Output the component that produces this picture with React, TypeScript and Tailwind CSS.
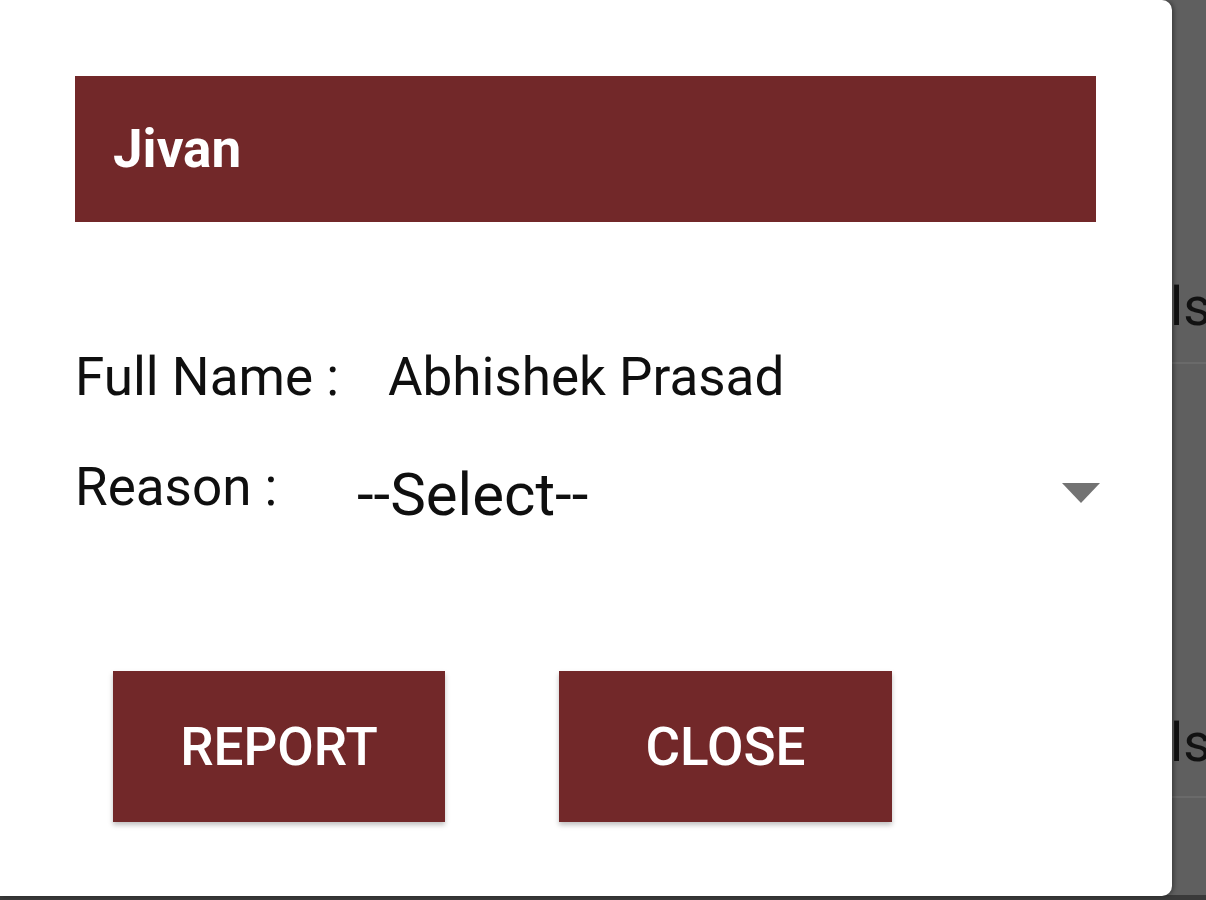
import React from "react";

export default function App() {
  return (
    <div
      className="relative w-[1206px] h-[900px] overflow-hidden bg-[#5f5f5f]"
      style={{ fontFamily: "Roboto, 'Liberation Sans', sans-serif" }}
    >
      {/* page behind the dimming overlay */}
      <div className="flex h-full">
        <div className="w-[1172px] shrink-0" />
        <div className="flex flex-1 flex-col">
          <div className="flex h-[364px] items-end border-b-2 border-[#6a6a6a] pb-[28px]">
            <span className="text-[54px] leading-[54px] text-[#111] -ml-[2px]">ls</span>
          </div>
          <div className="flex h-[434px] items-end border-b-2 border-[#6a6a6a] pb-[26px]">
            <span className="text-[54px] leading-[54px] text-[#111] -ml-[2px]">ls</span>
          </div>
        </div>
      </div>
      <div className="absolute bottom-0 left-0 h-[5px] w-full bg-[#3a3a3a]" />

      {/* dialog */}
      <div className="absolute left-0 top-0 flex h-[896px] w-[1172px] flex-col rounded-r-[10px] bg-white pl-[75px] pr-[76px] pt-[76px] shadow-[2px_0_4px_rgba(0,0,0,0.35)]">
        <div className="flex h-[146px] items-center bg-[#722829] pl-[38px]">
          <span className="text-[53px] font-bold leading-[54px] text-white">Jivan</span>
        </div>

        <div className="mt-[128px] flex text-[53px] leading-[54px] text-[#0f0f0f]">
          <span className="w-[313px] shrink-0">Full Name :</span>
          <span>Abhishek Prasad</span>
        </div>

        <div className="mt-[56px] flex items-start text-[#0f0f0f]">
          <span className="w-[282px] shrink-0 text-[53px] leading-[54px]">Reason :</span>
          <div className="mt-[5px] flex flex-1 items-center justify-between">
            <span className="text-[60px] leading-[60px]">--Select--</span>
            <svg width="38" height="20" viewBox="0 0 38 20" className="-mr-[4px] mt-[-4px]">
              <polygon points="0,0 38,0 19,20" fill="#737373" />
            </svg>
          </div>
        </div>

        <div className="mt-[146px] flex gap-[114px] pl-[38px]">
          <button className="flex h-[151px] w-[332px] items-center justify-center bg-[#722829] text-[53px] font-medium leading-[54px] text-white shadow-[0_3px_5px_rgba(0,0,0,0.25)]">
            REPORT
          </button>
          <button className="flex h-[151px] w-[333px] items-center justify-center bg-[#722829] text-[53px] font-medium leading-[54px] text-white shadow-[0_3px_5px_rgba(0,0,0,0.25)]">
            CLOSE
          </button>
        </div>
      </div>
    </div>
  );
}
